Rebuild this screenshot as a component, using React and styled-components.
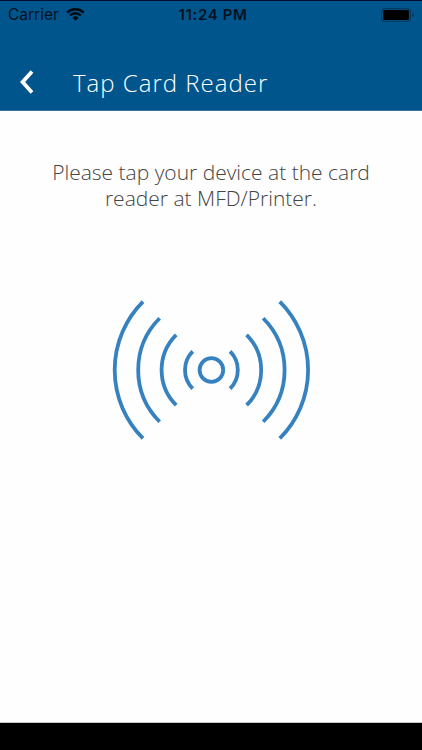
import React from "react";
import styled, { createGlobalStyle } from "styled-components";

const waves = [26.4, 49.8, 73.2, 96.7];

function SignalIcon() {
  return (
    <SignalSvg viewBox="-100.4 -70 200 140">
      <circle r="11.8" />
      {waves.map((r) => {
        const d = r * Math.SQRT1_2;
        return (
          <g key={r}>
            <path d={`M${-d} ${-d}A${r} ${r} 0 0 0 ${-d} ${d}`} />
            <path d={`M${d} ${-d}A${r} ${r} 0 0 1 ${d} ${d}`} />
          </g>
        );
      })}
    </SignalSvg>
  );
}

function WifiIcon() {
  return (
    <WifiSvg viewBox="0 0 19 13">
      <path d="M1.2 4.6A11.8 11.8 0 0 1 17.8 4.6" />
      <path d="M4.1 7.5A7.7 7.7 0 0 1 14.9 7.5" />
      <path
        className="dot"
        d="M9.5 12.7L6.5 9.8A4.3 4.3 0 0 1 12.5 9.8Z"
      />
    </WifiSvg>
  );
}

function BatteryIcon() {
  return (
    <BatterySvg viewBox="0 0 34 14">
      <rect
        className="shell"
        x="0.6"
        y="0.6"
        width="28.8"
        height="12.8"
        rx="3.4"
      />
      <rect x="2.2" y="2.1" width="25.7" height="9.8" rx="1.2" />
      <path className="cap" d="M31.2 4.8Q33.2 5.4 33.2 7T31.2 9.2Z" />
    </BatterySvg>
  );
}

function App() {
  return (
    <Screen>
      <GlobalStyle />
      <Header>
        <StatusBar>
          <Carrier>
            <span>Carrier</span>
            <WifiIcon />
          </Carrier>
          <Time>11:24 PM</Time>
          <BatteryIcon />
        </StatusBar>
        <NavBar>
          <BackButton aria-label="Back">
            <svg width="14" height="24" viewBox="0 0 14 24">
              <path d="M12 1.6L2.6 12L12 22.4" />
            </svg>
          </BackButton>
          <Title>Tap Card Reader</Title>
        </NavBar>
      </Header>
      <Content>
        <Message>
          <span>Please tap your device at the card</span>
          <span>reader at MFD/Printer.</span>
        </Message>
        <SignalIcon />
      </Content>
      <BottomBar />
    </Screen>
  );
}

export default App;

const GlobalStyle = createGlobalStyle`
  * {
    box-sizing: border-box;
  }
  body {
    margin: 0;
    background: #fff;
  }
`;

const Screen = styled.div`
  display: flex;
  flex-direction: column;
  width: 422px;
  height: 750px;
  overflow: hidden;
  background: #fefefe;
  font-family: "Open Sans", sans-serif;
`;

const Header = styled.header`
  flex: none;
  height: 111px;
  background: #01558d;
  border-top: 1px solid #03102f;
  border-bottom: 1px solid #39749c;
`;

const StatusBar = styled.div`
  display: grid;
  grid-template-columns: 1fr auto 1fr;
  align-items: center;
  height: 27px;
  padding: 0 7px 0 8px;
  font-family: Inter, sans-serif;
  color: #04121f;
`;

const Carrier = styled.div`
  display: flex;
  align-items: center;
  gap: 7px;
  font-size: 15.5px;
`;

const Time = styled.div`
  padding-left: 3px;
  font-size: 15px;
  font-weight: 600;
  letter-spacing: 0.65px;
`;

const WifiSvg = styled.svg`
  width: 19px;
  height: 13px;
  fill: none;
  stroke: #020a12;
  stroke-width: 2.4;

  .dot {
    fill: #020a12;
    stroke: none;
  }
`;

const BatterySvg = styled.svg`
  justify-self: end;
  width: 34px;
  height: 14px;
  fill: #000;

  .shell {
    fill: none;
    stroke: #033a61;
    stroke-width: 1.2;
  }
  .cap {
    fill: #033a61;
  }
`;

const NavBar = styled.div`
  display: flex;
  align-items: center;
  height: 81px;
  padding: 26px 0 0 20px;
`;

const BackButton = styled.button`
  display: flex;
  width: 53px;
  padding: 0;
  border: none;
  background: transparent;
  cursor: pointer;

  path {
    fill: none;
    stroke: #fff;
    stroke-width: 3.8;
  }
`;

const Title = styled.h1`
  margin: 0;
  padding-top: 2px;
  font-size: 24px;
  font-weight: 300;
  line-height: 34px;
  letter-spacing: 1px;
  white-space: nowrap;
  color: #fff;
`;

const Content = styled.main`
  flex: 1;
  display: flex;
  flex-direction: column;
  align-items: center;
  padding-top: 48px;
`;

const Message = styled.p`
  display: flex;
  flex-direction: column;
  align-items: center;
  margin: 0;
  font-size: 21px;
  font-weight: 300;
  line-height: 26px;
  white-space: nowrap;
  color: #444;
`;

const SignalSvg = styled.svg`
  width: 200px;
  height: 140px;
  margin-top: 89px;
  overflow: visible;
  fill: none;
  stroke: #3682c1;
  stroke-width: 3.8;
`;

const BottomBar = styled.div`
  flex: none;
  height: 28px;
  border-top: 1px solid #c8c8c8;
  background: #000;
`;
